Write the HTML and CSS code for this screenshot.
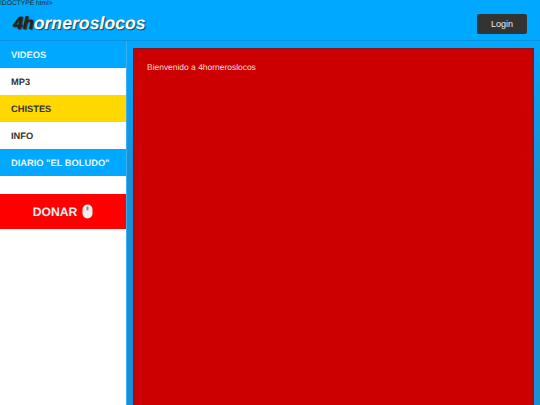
FILE: index.html
```html
<!DOCTYPE html>
<html lang="es">
<head>
<meta charset="utf-8">
<title>4horneroslocos</title>
<link rel="stylesheet" href="styles.css">
</head>
<body>
<div class="doctype">!DOCTYPE html&gt;</div>
<header class="topbar">
  <div class="logo"><span class="logo-dark">4h</span>orneroslocos</div>
  <button class="login">Login</button>
</header>
<div class="page">
  <nav class="side">
    <a class="item blue">VIDEOS</a>
    <a class="item white">MP3</a>
    <a class="item yellow">CHISTES</a>
    <a class="item white">INFO</a>
    <a class="item blue">DIARIO "EL BOLUDO"</a>
    <div class="spacer"></div>
    <a class="donate">DONAR
      <svg class="mouse" width="11" height="15" viewBox="0 0 11 15">
        <rect x="0.5" y="0.5" width="10" height="14" rx="5" fill="#f4eeee"/>
        <rect x="4.5" y="2.5" width="2" height="4" rx="1" fill="#8a8a8a"/>
      </svg>
    </a>
  </nav>
  <main class="content">
    <p class="welcome">Bienvenido a 4horneroslocos</p>
  </main>
</div>
</body>
</html>
```
FILE: styles.css
```css
html, body {
  margin: 0;
  height: 405px;
  overflow: hidden;
}
body {
  background: #00a8ff;
  font-family: "Liberation Sans", Arial, sans-serif;
  text-rendering: geometricPrecision;
  display: flex;
  flex-direction: column;
}
.doctype {
  font-size: 6.7px;
  line-height: 7px;
  height: 7px;
  color: #222;
  white-space: nowrap;
}
.topbar {
  height: 33px;
  border-bottom: 2px solid #0a93db;
  display: flex;
  align-items: center;
  justify-content: space-between;
  padding: 0 13px;
  flex: none;
}
.logo {
  font-size: 17.7px;
  font-weight: bold;
  font-style: italic;
  color: #fff;
  text-shadow: 1px 1px 1px #1c3f55;
}
.logo-dark {
  color: #222;
  text-shadow: 1px 0 1px #333, 1px 1px 1px #444;
}
.login {
  width: 50px;
  height: 20px;
  background: #333;
  color: #eee;
  border: 0;
  border-radius: 2px;
  font: 9px "Liberation Sans", Arial, sans-serif;
  padding: 0;
}
.page {
  display: flex;
  flex: 1;
  min-height: 0;
  margin-top: -1px;
  background: linear-gradient(#00a8ff 0, #1a8fd6 130px);
}
.side {
  width: 126px;
  background: #fff;
  border-right: 1px solid #3bb0ef;
  display: flex;
  flex-direction: column;
  flex: none;
}
.item {
  height: 27px;
  line-height: 28px;
  padding-left: 11px;
  font-size: 9.3px;
  font-weight: bold;
  color: #333;
}
.blue { background: #00a8ff; color: #e8f6ff; }
.white { background: #fff; }
.yellow { background: #ffd800; }
.spacer { height: 18px; }
.donate {
  height: 35px;
  background: #f00;
  color: #f4eeee;
  font-size: 12.2px;
  font-weight: bold;
  display: flex;
  align-items: center;
  justify-content: center;
  gap: 5px;
}
.mouse { display: block; }
.content {
  flex: 1;
  margin: 7px 6px 0 6px;
  background: #c00;
  border: 1px solid #8e0f1e;
  border-bottom: 0;
  box-shadow: inset 1px 0 0 #a90a14, inset -1px 0 0 #a90a14;
}
.welcome {
  margin: 13px 0 0 13px;
  font-size: 8.45px;
  line-height: 11px;
  color: #f6dcdc;
}
```
